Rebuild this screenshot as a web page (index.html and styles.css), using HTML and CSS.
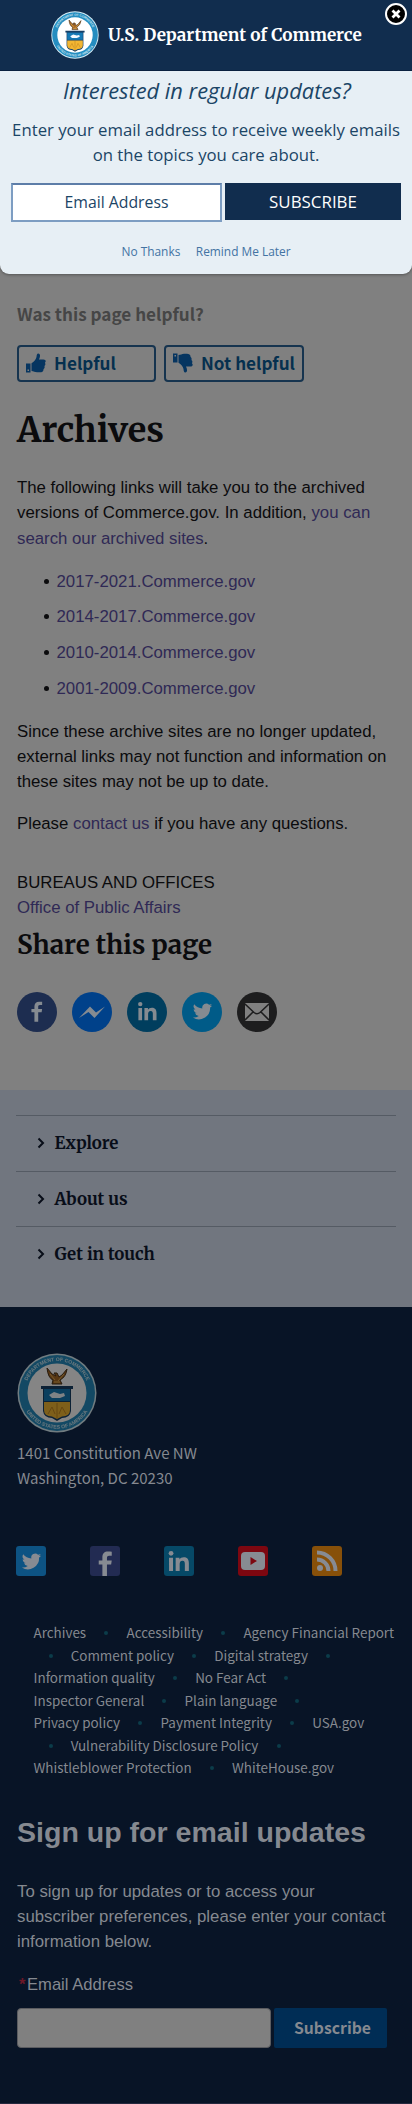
FILE: index.html
```html
<!DOCTYPE html>
<html lang="en">
<head>
<meta charset="utf-8">
<meta name="viewport" content="width=device-width, initial-scale=1">
<title>Archives | U.S. Department of Commerce</title>
<link rel="stylesheet" href="styles.css">
</head>
<body>
<svg class="defs" width="0" height="0" aria-hidden="true">
  <defs>
    <path id="arc-top" d="M-32 0A32 32 0 0 1 32 0"/>
    <path id="arc-bottom" d="M-35.700 0A35.700 35.700 0 0 0 35.700 0"/>
    <symbol id="seal" viewBox="-40 -40 80 80">
      <circle r="39.500" fill="#d9eef6"/>
      <circle r="38" fill="#258dc0"/>
      <circle r="29.500" fill="#fff"/>
      <text class="seal-text"><textPath href="#arc-top" startOffset="50%" text-anchor="middle">DEPARTMENT OF COMMERCE</textPath></text>
      <text class="seal-text"><textPath href="#arc-bottom" startOffset="50%" text-anchor="middle">UNITED STATES OF AMERICA</textPath></text>
      <path d="M-10-25Q-9-15-4-13L-5-9H5L3-13Q9-16 10-24L5-18 2-16 0-20-3-20-1-17-5-19Z" fill="#a86a24" stroke="#49331b" stroke-width="1"/>
      <path d="M-7-19L-2-13M7-19L1-12M-3-11H3" stroke="#e4ae56" stroke-width="1" fill="none"/>
      <path d="M-16-7H16V-4H14V18Q13 25 5 25L0 28-5 25Q-13 25-14 18V-4H-16Z" fill="#173f66"/>
      <path d="M-13-4H13V8H-13Z" fill="#1679b5"/>
      <path d="M-13 9H13V17Q13 23 5 23.500L0 26-5 23.500Q-13 23-13 17Z" fill="#f3b632"/>
      <path d="M-8 2L-3-1 3 1 7 0 8 3 3 5-5 5Z" fill="#f4faff"/>
      <path d="M0 10V25M-9 21L-5 14-2 21M9 21L5 14 2 21" stroke="#c58a22" stroke-width="1" fill="none"/>
    </symbol>
    <symbol id="thumb" viewBox="0 0 20 20">
      <path d="M0 10.500H4.500V19.500H0ZM1.500 16.500V18H3V16.500Z" fill-rule="evenodd"/>
      <path d="M5.500 10.200C8 9 10 6 10.500 4C10.700 2 11 .5 12.200 .5C14.500 .5 14.500 3.500 13 6.500H17.500C19.500 6.500 20.500 8.500 18.900 9.700C19.800 11 19.400 12.300 18.400 12.900C19 14.300 18.300 15.400 17.500 15.900C17.800 18.300 16 19.300 14 19.300H11C9 19.300 7.500 18 5.500 18Z"/>
    </symbol>
    <symbol id="bird" viewBox="0 0 24 24">
      <path d="M23 5.100A9 9 0 0 1 20.400 5.800A4.500 4.500 0 0 0 22.400 3.300A9 9 0 0 1 19.500 4.400A4.520 4.520 0 0 0 11.800 8.500A12.800 12.800 0 0 1 2.500 3.800A4.520 4.520 0 0 0 3.900 9.800A4.500 4.500 0 0 1 1.900 9.300C1.900 11.500 3.400 13.300 5.500 13.800A4.600 4.600 0 0 1 3.500 13.900A4.520 4.520 0 0 0 7.700 17A9 9 0 0 1 1 18.900A12.800 12.800 0 0 0 20.700 7.500A9 9 0 0 0 23 5.100Z"/>
    </symbol>
    <symbol id="linkedin" viewBox="0 0 24 24">
      <circle cx="3.700" cy="3.500" r="2.500"/>
      <path d="M1.600 8H5.800V22H1.600ZM8.500 8H12.500V9.900C13.300 8.500 14.900 7.600 17 7.600C21.200 7.600 22.300 10.300 22.300 14V22H18.100V14.900C18.100 13 17.900 11.300 15.600 11.300C13.300 11.300 12.700 13 12.700 14.900V22H8.500Z"/>
    </symbol>
    <symbol id="facebook" viewBox="0 0 14 24">
      <path d="M4 24V13H.5V9H4V6C4 2.300 6 .5 9.300 .5C10.800 .5 12 .6 13 .7V4.500H10.500C8.700 4.500 8.400 5.400 8.400 6.700V9H13L12.400 13H8.400V24Z"/>
    </symbol>
  </defs>
</svg>

<section class="modal">
  <header class="modal-head">
    <svg class="head-seal" role="img" aria-label="Department of Commerce seal"><use href="#seal"/></svg>
    <span class="brand">U.S. Department of Commerce</span>
    <button class="close" aria-label="Close">
      <svg width="24" height="24" viewBox="0 0 24 24"><circle cx="12" cy="12" r="10" fill="#000" stroke="#fff" stroke-width="2"/><path d="M8.500 8.500L15.500 15.500M15.500 8.500L8.500 15.500" stroke="#fff" stroke-width="2.800"/></svg>
    </button>
  </header>
  <h2 class="modal-title">Interested in regular updates?</h2>
  <p class="modal-copy">Enter your email address to receive weekly emails<br>on the topics you care about.</p>
  <div class="modal-form">
    <div class="modal-input">Email Address</div>
    <div class="modal-submit">SUBSCRIBE</div>
  </div>
  <div class="modal-links"><a>No Thanks</a><a>Remind Me Later</a></div>
</section>

<main class="content">
  <p class="question">Was this page helpful?</p>
  <div class="votes">
    <div class="vote"><svg class="thumb"><use href="#thumb"/></svg><span>Helpful</span></div>
    <div class="vote vote-no"><svg class="thumb thumb-down"><use href="#thumb"/></svg><span>Not helpful</span></div>
  </div>
  <h1>Archives</h1>
  <p class="intro">The following links will take you to the archived<br>versions of Commerce.gov. In addition, <a>you can<br>search our archived sites</a>.</p>
  <ul class="archive-list">
    <li><a>2017-2021.Commerce.gov</a></li>
    <li><a>2014-2017.Commerce.gov</a></li>
    <li><a>2010-2014.Commerce.gov</a></li>
    <li><a>2001-2009.Commerce.gov</a></li>
  </ul>
  <p class="note">Since these archive sites are no longer updated,<br>external links may not function and information on<br>these sites may not be up to date.</p>
  <p class="contact">Please <a>contact us</a> if you have any questions.</p>
  <p class="offices">BUREAUS AND OFFICES<br><a>Office of Public Affairs</a></p>
  <h2 class="share-title">Share this page</h2>
  <div class="share">
    <span class="disc disc-fb"><svg width="12" height="21"><use href="#facebook"/></svg></span>
    <span class="disc disc-ms"><svg width="26" height="14" viewBox="0 0 26 14"><path d="M0 13L11 1.500 17 7.500 26 1.500 15.500 13 9.500 7Z"/></svg></span>
    <span class="disc disc-in"><svg width="21" height="21"><use href="#linkedin"/></svg></span>
    <span class="disc disc-tw"><svg width="21" height="21"><use href="#bird"/></svg></span>
    <span class="disc disc-ml"><svg width="26" height="20" viewBox="0 0 26 20"><rect x="1" y="1" width="24" height="18" rx="1"/><path class="flap" d="M1 2L10 10.500Q13 13 16 10.500L25 2M1 18L9 10M25 18L17 10"/></svg></span>
  </div>
</main>

<nav class="sections">
  <div class="section"><svg class="chevron" viewBox="0 0 8 12"><path d="M1.500 1.500L6 6 1.500 10.500"/></svg>Explore</div>
  <div class="section"><svg class="chevron" viewBox="0 0 8 12"><path d="M1.500 1.500L6 6 1.500 10.500"/></svg>About us</div>
  <div class="section"><svg class="chevron" viewBox="0 0 8 12"><path d="M1.500 1.500L6 6 1.500 10.500"/></svg>Get in touch</div>
</nav>

<footer class="footer">
  <svg class="foot-seal" role="img" aria-label="Department of Commerce seal"><use href="#seal"/></svg>
  <address>1401 Constitution Ave NW<br>Washington, DC 20230</address>
  <div class="social">
    <span class="tile tile-tw"><svg width="21" height="21"><use href="#bird"/></svg></span>
    <span class="tile tile-fb"><svg width="15" height="25"><use href="#facebook"/></svg></span>
    <span class="tile tile-in"><svg width="24" height="23"><use href="#linkedin"/></svg></span>
    <span class="tile tile-yt"><svg width="24" height="18" viewBox="0 0 24 18"><rect width="24" height="18" rx="4"/><path d="M9.500 5V13L16 9Z" fill="#7d0710"/></svg></span>
    <span class="tile tile-rs"><svg width="22" height="22" viewBox="0 0 22 22"><circle cx="4" cy="18" r="3"/><path class="wave" d="M1 9.500A11.500 11.500 0 0 1 12.500 21M1 2.500A18.500 18.500 0 0 1 19.500 21"/></svg></span>
  </div>
  <div class="foot-links">
    <div><a>Archives</a><i></i><a>Accessibility</a><i></i><a>Agency Financial Report</a></div>
    <div><i class="lead"></i><a>Comment policy</a><i></i><a>Digital strategy</a><i></i></div>
    <div><a>Information quality</a><i></i><a>No Fear Act</a><i></i></div>
    <div><a>Inspector General</a><i></i><a>Plain language</a><i></i></div>
    <div><a>Privacy policy</a><i></i><a>Payment Integrity</a><i></i><a>USA.gov</a></div>
    <div><i class="lead"></i><a>Vulnerability Disclosure Policy</a><i></i></div>
    <div><a>Whistleblower Protection</a><i></i><a>WhiteHouse.gov</a></div>
  </div>
  <h2 class="signup-title">Sign up for email updates</h2>
  <p class="signup-copy">To sign up for updates or to access your<br>subscriber preferences, please enter your contact<br>information below.</p>
  <label class="signup-label" for="email"><span>*</span>Email Address</label>
  <div class="signup-form"><input id="email" type="text"><div class="signup-button">Subscribe</div></div>
</footer>
</body>
</html>
```
FILE: styles.css
```css
* { box-sizing: border-box; }
body {
  margin: 0;
  width: 412px;
  height: 2104px;
  overflow: hidden;
  display: flex;
  flex-direction: column;
  background: #808080;
  color: #0b0b0d;
  font: 16.8px/25.2px "Liberation Sans", Arial, sans-serif;
}
h1, h2, p, ul { margin: 0; padding: 0; }
svg { display: block; flex: none; }
.defs { position: absolute; }
.seal-text { font: bold 5.1px "Liberation Sans", sans-serif; fill: #c9e5f1; }

/* Subscription dialog */
.modal {
  height: 274px;
  flex: none;
  background: #e7eff5;
  border-radius: 0 0 9px 9px;
  box-shadow: 0 1px 3px #555;
  color: #1b4566;
  font-family: "Open Sans", sans-serif;
  text-align: center;
}
.modal-head {
  position: relative;
  height: 71px;
  display: flex;
  align-items: center;
  padding-left: 51px;
  gap: 9px;
  background: #112d4e;
  border-bottom: 1px solid #0a213f;
}
.head-seal { width: 48px; height: 48px; }
.brand { font: bold 17.14px/24px Merriweather, "Noto Serif", serif; color: #fff; padding-bottom: 1px; }
.close { position: absolute; right: 4px; top: 2px; padding: 0; border: 0; background: none; }
.modal-title { margin-top: 4.5px; padding-left: 2px; font-size: 21.82px; line-height: 30px; font-style: italic; font-weight: 400; }
.modal-copy { margin-top: 11px; font-size: 16.74px; line-height: 25px; white-space: nowrap; }
.modal-form { display: flex; gap: 3px; margin: 16.5px 11px 0; align-items: flex-start; }
.modal-input {
  width: 211px;
  height: 39px;
  border: 2px solid #7d9dc2;
  border-top-color: #5d7da8;
  background: #fff;
  font-size: 15.8px;
  line-height: 34px;
}
.modal-submit { flex: 1; height: 37px; background: #112d4e; color: #fff; font-size: 16.92px; line-height: 37px; }
.modal-links { display: flex; justify-content: center; gap: 15.5px; margin-top: 20.5px; font-size: 11.9px; line-height: 16px; color: #4373a3; }

/* Page content */
.content { height: 816px; flex: none; padding: 27.5px 17px 0; }
.content a { color: #2f2955; }
.question { font: bold 17.12px/24px "Noto Sans CJK JP", "Noto Sans", sans-serif; color: #464646; }
.votes { display: flex; gap: 8px; margin-top: 19.5px; }
.vote {
  display: flex;
  align-items: center;
  width: 139px;
  height: 37px;
  padding: 0 0 2px 7px;
  gap: 8px;
  border: 2px solid #16344f;
  border-radius: 4px;
  color: #06304f;
  font: bold 17.12px/24px "Noto Sans CJK JP", "Noto Sans", sans-serif;
  white-space: nowrap;
}
.vote-no { width: 140px; }
.thumb { width: 20px; height: 20px; fill: #063560; }
.thumb-down { transform: scaleY(-1); }
h1 { margin-top: 27.5px; font: bold 34.24px/40px Merriweather, "Noto Serif", serif; }
.intro { margin-top: 25.7px; white-space: nowrap; }
.archive-list { margin: 18px 0 0 26.5px; list-style: none; }
.archive-list li { display: flex; align-items: center; gap: 8px; margin-bottom: 10.4px; }
.archive-list li::before { content: ""; width: 5px; height: 5px; border-radius: 50%; background: #0b0b0d; }
.note { margin-top: 18px; white-space: nowrap; }
.contact { margin-top: 16.3px; }
.offices { margin-top: 34px; }
.share-title { margin-top: 9.2px; font: bold 25.8px/32px Merriweather, "Noto Serif", serif; }
.share { display: flex; gap: 15px; margin-top: 30.5px; }
.disc { width: 40px; height: 40px; border-radius: 50%; display: flex; align-items: center; justify-content: center; fill: #858b91; }
.disc-fb { background: #1d2d50; }
.disc-ms { background: #00418a; }
.disc-in { background: #003e5e; }
.disc-tw { background: #005b88; }
.disc-ml { background: #1d1d1e; fill: #808080; }
.flap { fill: none; stroke: #1d1d1e; stroke-width: 1.6; }

/* Collapsible sections */
.sections { height: 217px; flex: none; padding: 25px 16px 0; background: #71767f; color: #080d18; }
.section { height: 55.5px; display: flex; align-items: center; gap: 10px; padding-left: 20.5px; border-top: 1px solid #555b64; font: bold 16.8px/24px Merriweather, "Noto Serif", serif; }
.chevron { width: 8px; height: 12px; fill: none; stroke: #080d18; stroke-width: 2; }

/* Footer */
.footer { flex: 1; padding: 46px 17px 0; background: #081426; border-bottom: 1px solid #25283e; color: #858990; }
.foot-seal { width: 80px; height: 80px; filter: brightness(.52); }
address { margin-top: 7px; font: 15.04px/25.2px "Noto Sans CJK JP", "Noto Sans", sans-serif; }
.social { display: flex; gap: 44px; margin: 55.6px 0 0 -1px; }
.tile { width: 30px; height: 30px; border-radius: 3px; display: flex; align-items: center; justify-content: center; fill: #878b92; overflow: hidden; }
.tile-tw { background: #0d5383; }
.tile-fb { background: #222b52; align-items: flex-end; }
.tile-in { background: #064967; }
.tile-yt { background: #7d0710; }
.tile-rs { background: #875009; }
.wave { fill: none; stroke: #878b92; stroke-width: 4; }
.foot-links { margin: 45.2px 0 0 16.5px; font: 13.44px/22.5px "Noto Sans CJK JP", "Noto Sans", sans-serif; }
.foot-links div { height: 22.5px; display: flex; align-items: center; white-space: nowrap; }
.foot-links i { flex: none; width: 4px; height: 4px; margin: 2px 18.2px 0; border-radius: 50%; background: #0b3c4a; }
.foot-links .lead { margin-left: 15px; }
.signup-title { margin-top: 35.3px; font-size: 28.55px; line-height: 36px; white-space: nowrap; }
.signup-copy { margin-top: 28.6px; white-space: nowrap; }
.signup-label { display: block; margin-top: 17.6px; padding-left: 2px; font-size: 16.6px; }
.signup-label span { display: inline-block; width: 8px; color: #6b1828; font-weight: bold; }
.signup-form { display: flex; gap: 3px; margin-top: 11px; }
.signup-form input { width: 254px; height: 40px; border: 1px solid #5b5c60; border-radius: 4px; background: #808080; padding: 0; }
.signup-button { width: 113px; height: 40px; background: #002d55; border-radius: 2px; font: bold 15.76px/39px "Noto Sans CJK JP", "Noto Sans", sans-serif; text-align: center; padding-left: 4px; }
```
